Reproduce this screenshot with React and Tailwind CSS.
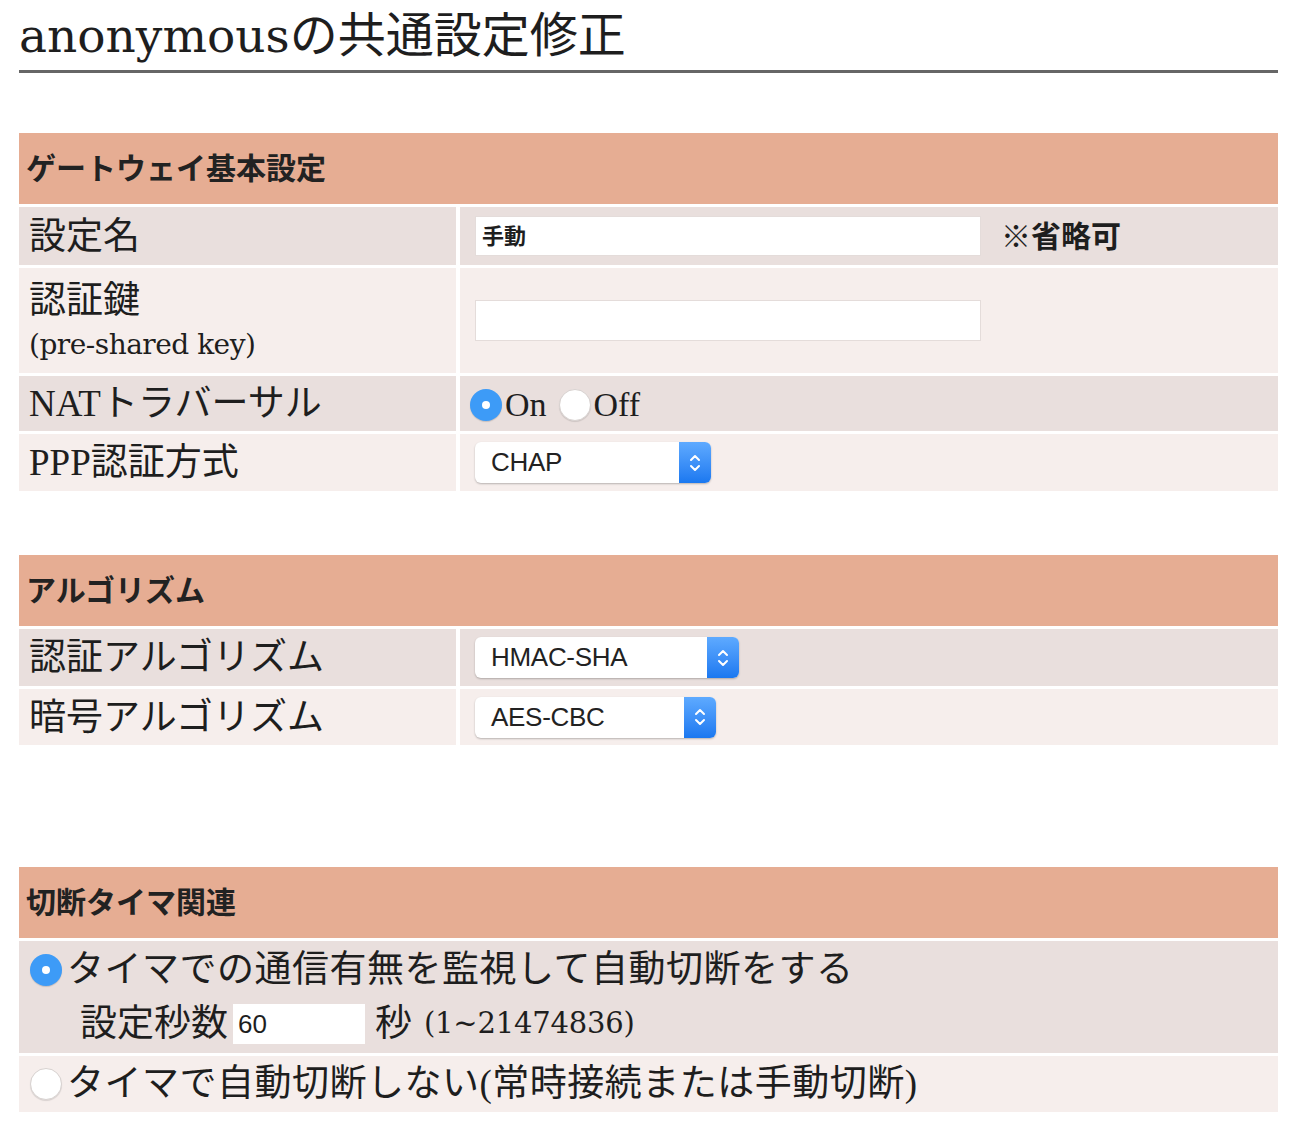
import React from 'react';

const serif = "font-['Liberation_Serif','Noto_Sans_CJK_JP',serif]";
const wide = "font-['DejaVu_Serif','Noto_Sans_CJK_JP',serif]";

function Radio({ checked }) {
  return checked ? (
    <span className="inline-flex w-[32px] h-[32px] shrink-0 rounded-full bg-[#3d9bf7] items-center justify-center shadow-[0_1px_1px_rgba(0,0,0,0.15)]">
      <span className="w-[8px] h-[8px] rounded-full bg-white"></span>
    </span>
  ) : (
    <span className="inline-block w-[32px] h-[32px] shrink-0 rounded-full bg-white border border-[#d8d2d0] shadow-[0_1px_1px_rgba(0,0,0,0.12)]"></span>
  );
}

function Select({ value, width }) {
  return (
    <div className="flex h-[41px] rounded-[6px] bg-white shadow-[0_1px_2px_rgba(0,0,0,0.25)]" style={{ width }}>
      <span className="flex-1 flex items-center pl-[16px] text-[26px] tracking-[-0.3px] text-[#222] font-['Liberation_Sans',sans-serif]">{value}</span>
      <span className="w-[32px] rounded-r-[6px] bg-gradient-to-b from-[#5eaaff] to-[#1a78f0] flex items-center justify-center">
        <svg width="14" height="24" viewBox="0 0 14 24" fill="none" stroke="white" strokeWidth="2" strokeLinecap="round" strokeLinejoin="round">
          <path d="M3 9 L7 5 L11 9" />
          <path d="M3 15 L7 19 L11 15" />
        </svg>
      </span>
    </div>
  );
}

function Row({ dark, label, children, h }) {
  return (
    <div className="grid grid-cols-[437px_1fr] gap-[4px]" style={{ height: h }}>
      <div className={`${dark ? 'bg-[#e9dfdd]' : 'bg-[#f6eeec]'} px-[10px] flex flex-col justify-center`}>{label}</div>
      <div className={`${dark ? 'bg-[#e9dfdd]' : 'bg-[#f6eeec]'} pl-[15px] flex items-center`}>{children}</div>
    </div>
  );
}

function Head({ title }) {
  return (
    <div className="h-[71px] bg-[#e6ad93] flex items-center px-[7px]">
      <span className="text-[30px] font-bold text-[#222]">{title}</span>
    </div>
  );
}

export default function App() {
  return (
    <div className={`w-[1300px] h-[1130px] bg-white pl-[19px] pr-[22px] text-[#1e1e1e] ${serif}`}>
      <h1 className="text-[48px] leading-[68px] pt-[2px] border-b-[3px] border-[#666] font-normal">
        <span className={`${wide} text-[47px]`}>anonymous</span>の共通設定修正
      </h1>

      <div className="mt-[60px] flex flex-col gap-[3px]">
        <Head title="ゲートウェイ基本設定" />
        <Row dark h={58} label={<span className="text-[37px] leading-none">設定名</span>}>
          <div className="w-[506px] h-[40px] bg-white border border-[#e4dcda] flex items-center px-[6px] text-[22px] font-bold">手動</div>
          <span className="ml-[20px] text-[30px] font-bold">※省略可</span>
        </Row>
        <Row h={105} label={<>
          <span className="text-[37px] leading-[48px]">認証鍵</span>
          <span className={`${wide} text-[28px] leading-[40px] tracking-[-0.5px]`}>(pre-shared key)</span>
        </>}>
          <div className="w-[506px] h-[41px] bg-white border border-[#e4dcda]"></div>
        </Row>
        <Row dark h={55} label={<span className="text-[37px] leading-none">NATトラバーサル</span>}>
          <div className="flex items-center text-[34px] -ml-[5px] mt-[2px]">
            <Radio checked />
            <span className="ml-[3px] mr-[12px]">On</span>
            <Radio />
            <span className="ml-[3px]">Off</span>
          </div>
        </Row>
        <Row h={57} label={<span className="text-[37px] leading-none">PPP認証方式</span>}>
          <Select value="CHAP" width={236} />
        </Row>
      </div>

      <div className="mt-[64px] flex flex-col gap-[3px]">
        <Head title="アルゴリズム" />
        <Row dark h={57} label={<span className="text-[37px] leading-none">認証アルゴリズム</span>}>
          <Select value="HMAC-SHA" width={264} />
        </Row>
        <Row h={56} label={<span className="text-[37px] leading-none">暗号アルゴリズム</span>}>
          <Select value="AES-CBC" width={241} />
        </Row>
      </div>

      <div className="mt-[122px] flex flex-col gap-[3px]">
        <Head title="切断タイマ関連" />
        <div className="bg-[#e9dfdd] h-[112px] px-[11px] flex flex-col justify-center">
          <div className="flex items-center h-[54px]">
            <Radio checked />
            <span className="ml-[5px] text-[37px] tracking-[0.5px]">タイマでの通信有無を監視して自動切断をする</span>
          </div>
          <div className="flex items-center h-[54px] pl-[50px]">
            <span className="text-[37px]">設定秒数</span>
            <div className="ml-[5px] w-[132px] h-[40px] bg-white flex items-center px-[5px] text-[26px] font-['Liberation_Sans',sans-serif]">60</div>
            <span className="ml-[10px] text-[37px]">秒</span>
            <span className={`${wide} ml-[12px] text-[29px] tracking-[-0.2px]`}>(1~21474836)</span>
          </div>
        </div>
        <div className="bg-[#f6eeec] h-[56px] px-[11px] flex items-center">
          <Radio />
          <span className="ml-[5px] text-[37px] tracking-[0.5px]">タイマで自動切断しない(常時接続または手動切断)</span>
        </div>
      </div>
    </div>
  );
}
